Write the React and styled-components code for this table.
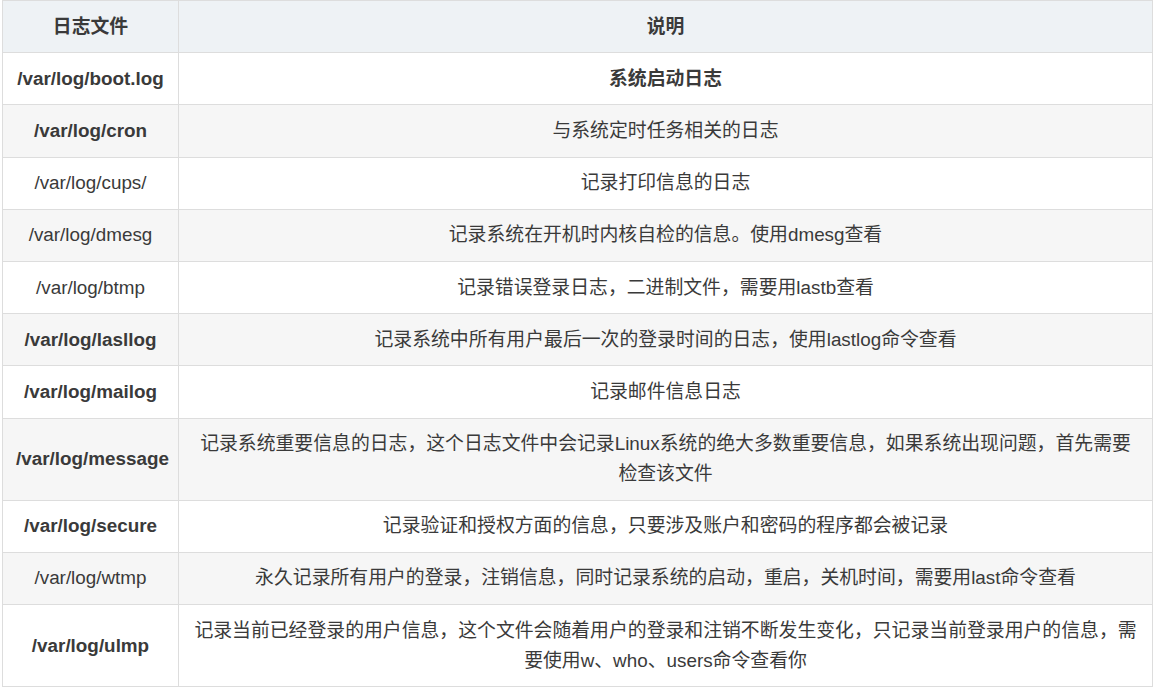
import React from "react";
import styled, { createGlobalStyle } from "styled-components";

const GlobalStyle = createGlobalStyle`
html, body {
margin: 0;
padding: 0;
background: #fff;
}
body {
font-family: "Liberation Sans", Arial, "Noto Sans CJK SC", sans-serif;
color: #333;
}
`;

const Wrap = styled.div`
padding-left: 2px;
width: 1151px;
`;

const Table = styled.table`
width: 1151px;
border-collapse: collapse;
table-layout: fixed;
font-size: 18.85px;
line-height: 30px;
`;

const HeadRow = styled.tr`
background: #eef2f5;
`;

const Row = styled.tr`
background: ${props => (props.$odd ? "#f6f6f6" : "#ffffff")};
`;

const Th = styled.th`
border: 1px solid #dddddd;
padding: 10.6px 13px;
font-weight: 700;
color: #3a3a3a;
text-align: center;
`;

const Td = styled.td`
border: 1px solid #dddddd;
padding: 10.6px 13px;
text-align: center;
color: #3a3a3a;
font-weight: ${props => (props.$bold ? 700 : 400)};
`;

const rows = [
    { file: "/var/log/boot.log", fb: true, desc: "系统启动日志", db: true },
    { file: "/var/log/cron", fb: true, desc: "与系统定时任务相关的日志" },
    { file: "/var/log/cups/", desc: "记录打印信息的日志" },
    { file: "/var/log/dmesg", desc: "记录系统在开机时内核自检的信息。使用dmesg查看" },
    { file: "/var/log/btmp", desc: "记录错误登录日志，二进制文件，需要用lastb查看" },
    { file: "/var/log/lasllog", fb: true, desc: "记录系统中所有用户最后一次的登录时间的日志，使用lastlog命令查看" },
    { file: "/var/log/mailog", fb: true, desc: "记录邮件信息日志" },
    { file: "/var/log/message", fb: true, desc: "记录系统重要信息的日志，这个日志文件中会记录Linux系统的绝大多数重要信息，如果系统出现问题，首先需要检查该文件" },
    { file: "/var/log/secure", fb: true, desc: "记录验证和授权方面的信息，只要涉及账户和密码的程序都会被记录" },
    { file: "/var/log/wtmp", desc: "永久记录所有用户的登录，注销信息，同时记录系统的启动，重启，关机时间，需要用last命令查看" },
    { file: "/var/log/ulmp", fb: true, desc: "记录当前已经登录的用户信息，这个文件会随着用户的登录和注销不断发生变化，只记录当前登录用户的信息，需要使用w、who、users命令查看你" },
];

function App() {
    return (
        <Wrap>
            <GlobalStyle />
            <Table>
                <colgroup>
                    <col style={{ width: "176px" }} />
                    <col />
                </colgroup>
                <thead>
                    <HeadRow>
                        <Th>日志文件</Th>
                        <Th>说明</Th>
                    </HeadRow>
                </thead>
                <tbody>
                    {rows.map((r, i) => (
                        <Row key={i} $odd={i % 2 === 1}>
                            <Td $bold={r.fb}>{r.file}</Td>
                            <Td $bold={r.db}>{r.desc}</Td>
                        </Row>
                    ))}
                </tbody>
            </Table>
        </Wrap>
    );
}

export default App;
